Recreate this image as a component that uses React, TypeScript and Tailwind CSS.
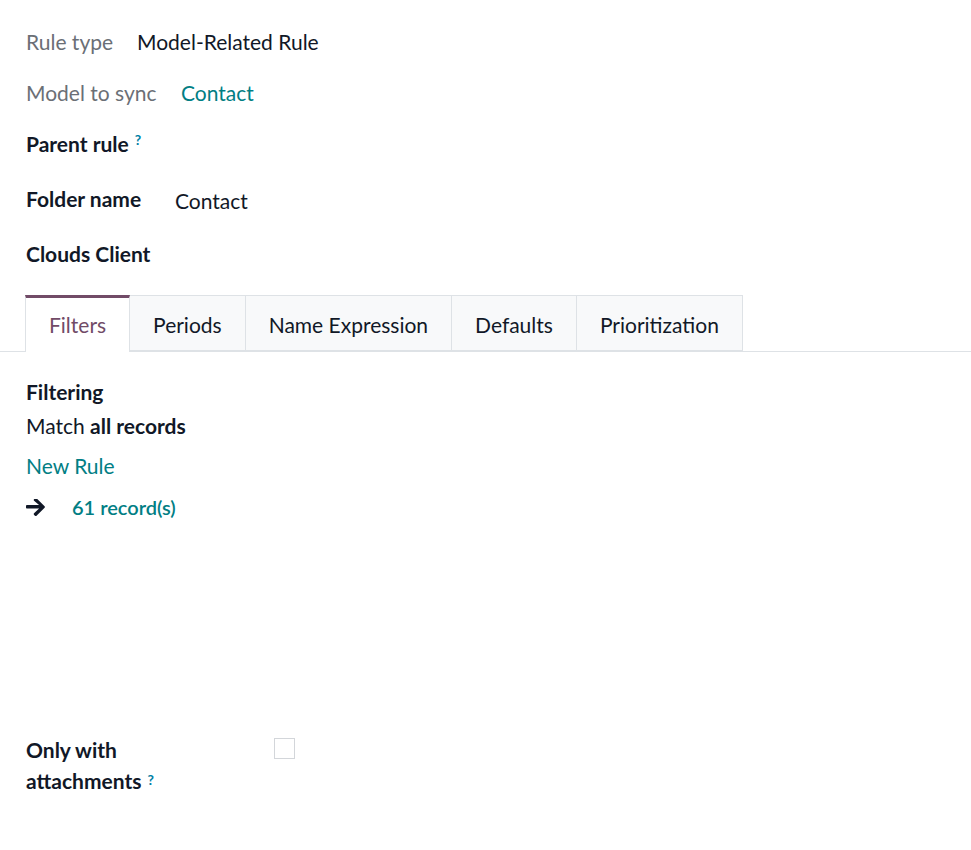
import React from "react";

const tabs = ["Filters", "Periods", "Name Expression", "Defaults", "Prioritization"];

function Help() {
  return <sup className="relative -top-[4px] ml-[6px] text-[14px] font-bold text-[#0180a5]">?</sup>;
}

function ArrowRight() {
  return (
    <svg width="19" height="17" viewBox="0 0 448 400" className="text-[#111827]">
      <path
        fill="currentColor"
        d="M190 35l23-23c10-10 26-10 35 0l190 190c10 10 10 26 0 35L248 427c-10 10-26 10-35 0l-23-23c-10-10-10-26 0-36l118-112H25c-14 0-25-11-25-25v-34c0-14 11-25 25-25h283L190 71c-10-10-10-26 0-36z"
        transform="translate(0 -30)"
      />
    </svg>
  );
}

export default function App() {
  return (
    <div
      className="min-h-[850px] bg-white text-[21px] text-[#111827]"
      style={{ fontFamily: "Lato, 'Noto Sans', sans-serif" }}
    >
      <div className="px-[26px] pt-[25px]">
        <div className="flex h-[34px] items-center">
          <span className="w-[111px] text-[#6b6f76]">Rule type</span>
          <span>Model-Related Rule</span>
        </div>
        <div className="mt-[17px] flex h-[34px] items-center">
          <span className="w-[155px] text-[#6b6f76]">Model to sync</span>
          <span className="text-[#017e84]">Contact</span>
        </div>
        <div className="mt-[17px] flex h-[34px] items-center font-bold">
          <span>Parent rule</span>
          <Help />
        </div>
        <div className="mt-[21px] flex h-[34px] items-center">
          <span className="w-[149px] font-bold">Folder name</span>
          <span className="mt-[4px]">Contact</span>
        </div>
        <div className="mt-[21px] flex h-[34px] items-center font-bold">Clouds Client</div>
      </div>

      <div className="mt-[24px] flex border-b border-[#dee2e6] pl-[25px]">
        {tabs.map((t, i) => (
          <div
            key={t}
            className={
              i === 0
                ? "-mb-px flex h-[57px] items-center border-x border-t-[3px] border-x-[#dee2e6] border-t-[#714b67] bg-white px-[23px] text-[#714b67]"
                : "flex h-[56px] items-center border-y border-r border-[#dee2e6] bg-[#f8f9fa] px-[23px] pt-[3px]"
            }
          >
            {t}
          </div>
        ))}
      </div>

      <div className="px-[26px] pt-[25px]">
        <div className="font-bold leading-[30px]">Filtering</div>
        <div className="leading-[38px]">
          Match <b>all records</b>
        </div>
        <div className="mt-[1px] leading-[40px] text-[#017e84]">New Rule</div>
        <div className="mt-[1px] flex h-[40px] items-center">
          <span className="flex w-[46px] items-center">
            <ArrowRight />
          </span>
          <span className="text-[20px] font-semibold text-[#017e84]">61 record(s)</span>
        </div>

        <div className="mt-[207px] flex">
          <div className="w-[248px] font-bold leading-[31px]">
            Only with
            <br />
            attachments
            <Help />
          </div>
          <div className="mt-[4px] h-[21px] w-[21px] border border-[#d3d6da] bg-white" />
        </div>
      </div>
    </div>
  );
}
